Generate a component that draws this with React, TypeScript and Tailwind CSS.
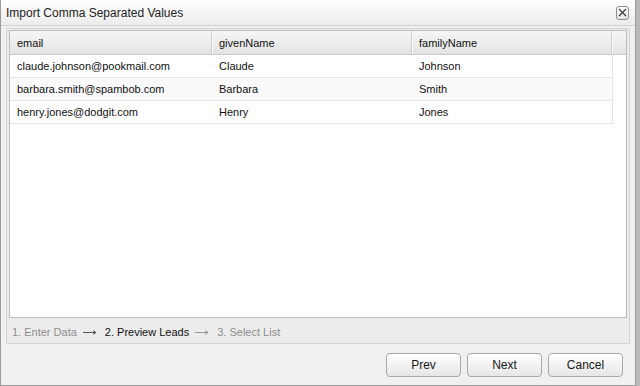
import React from 'react';

const rows = [
  { email: 'claude.johnson@pookmail.com', given: 'Claude', family: 'Johnson' },
  { email: 'barbara.smith@spambob.com', given: 'Barbara', family: 'Smith' },
  { email: 'henry.jones@dodgit.com', given: 'Henry', family: 'Jones' },
];

function Btn({ label }: { label: string }) {
  return (
    <button className="h-[24px] w-[75px] rounded-[4px] border border-[#a9a9a9] bg-gradient-to-b from-white to-[#e6e6e6] text-[12px] text-[#1a1a1a] shadow-[inset_0_1px_0_#fff]">
      {label}
    </button>
  );
}

function Arrow({ color }: { color: string }) {
  return (
    <svg width="14" height="7" viewBox="0 0 14 7" className="ml-[6px] mr-[8px] mt-[1px]">
      <path d="M0 3.5 H12.5 M10 1.5 L13 3.5 L10 5.5" stroke={color} strokeWidth="1" fill="none" />
    </svg>
  );
}

export default function App() {
  return (
    <div className="flex h-[386px] w-[640px] bg-[#b9b9b9] font-['Liberation_Sans',Arial,sans-serif] text-[11px] text-[#111]">
      <div className="flex h-full w-[636px] flex-col border-x border-b border-[#9c9c9c] bg-[#f0f0f0]">
        {/* title bar */}
        <div className="flex h-[26px] shrink-0 items-center justify-between border-b border-[#d2d2d2] bg-gradient-to-b from-white to-[#ececec] pl-[5px] pr-[6px]">
          <span className="text-[12px] text-[#222]">Import Comma Separated Values</span>
          <button className="flex h-[14px] w-[13px] items-center justify-center rounded-[3px] border border-[#8e8e8e] bg-gradient-to-b from-white to-[#e4e4e4]">
            <svg width="9" height="9" viewBox="0 0 9 9">
              <path d="M1 1 L8 8 M8 1 L1 8" stroke="#333" strokeWidth="1.1" />
            </svg>
          </button>
        </div>

        {/* panel */}
        <div className="mx-[5px] mt-[2px] flex h-[316px] flex-col border border-[#d4d4d4] bg-[#ececec] px-[2px] pt-[1px]">
          <div className="flex flex-1 flex-col border border-[#bdbdbd] bg-white">
            <div className="flex h-[24px] border-b border-[#c9c9c9] bg-gradient-to-b from-[#f6f6f6] to-[#e3e3e3]">
              <div className="flex w-[202px] items-center border-r border-[#cfcfcf] pl-[7px] pt-[1px] shadow-[1px_0_0_#fafafa]">email</div>
              <div className="flex w-[200px] items-center border-r border-[#cfcfcf] pl-[7px] pt-[1px] shadow-[1px_0_0_#fafafa]">givenName</div>
              <div className="flex w-[200px] items-center border-r border-[#cfcfcf] pl-[7px] pt-[1px] shadow-[1px_0_0_#fafafa]">familyName</div>
              <div className="flex-1" />
            </div>
            {rows.map((r, i) => (
              <div
                key={r.email}
                className={`flex h-[23px] w-[603px] border-b border-r border-[#e6e6e6] pt-[1px] ${i === 1 ? 'bg-[#fafafa]' : 'bg-white'}`}
              >
                <div className="flex w-[202px] items-center pl-[7px]">{r.email}</div>
                <div className="flex w-[200px] items-center pl-[7px]">{r.given}</div>
                <div className="flex w-[200px] items-center pl-[7px]">{r.family}</div>
              </div>
            ))}
          </div>
          <div className="flex h-[25px] shrink-0 items-center pl-[3px] pt-[3px] text-[11px] text-[#8c8c8c]">
            <span>1. Enter Data</span>
            <Arrow color="#555" />
            <span className="text-[#111]">2. Preview Leads</span>
            <Arrow color="#999" />
            <span>3. Select List</span>
          </div>
        </div>

        {/* footer */}
        <div className="flex flex-1 items-center justify-end gap-[6px] pr-[12px] pt-[1px]">
          <Btn label="Prev" />
          <Btn label="Next" />
          <Btn label="Cancel" />
        </div>
      </div>
    </div>
  );
}
